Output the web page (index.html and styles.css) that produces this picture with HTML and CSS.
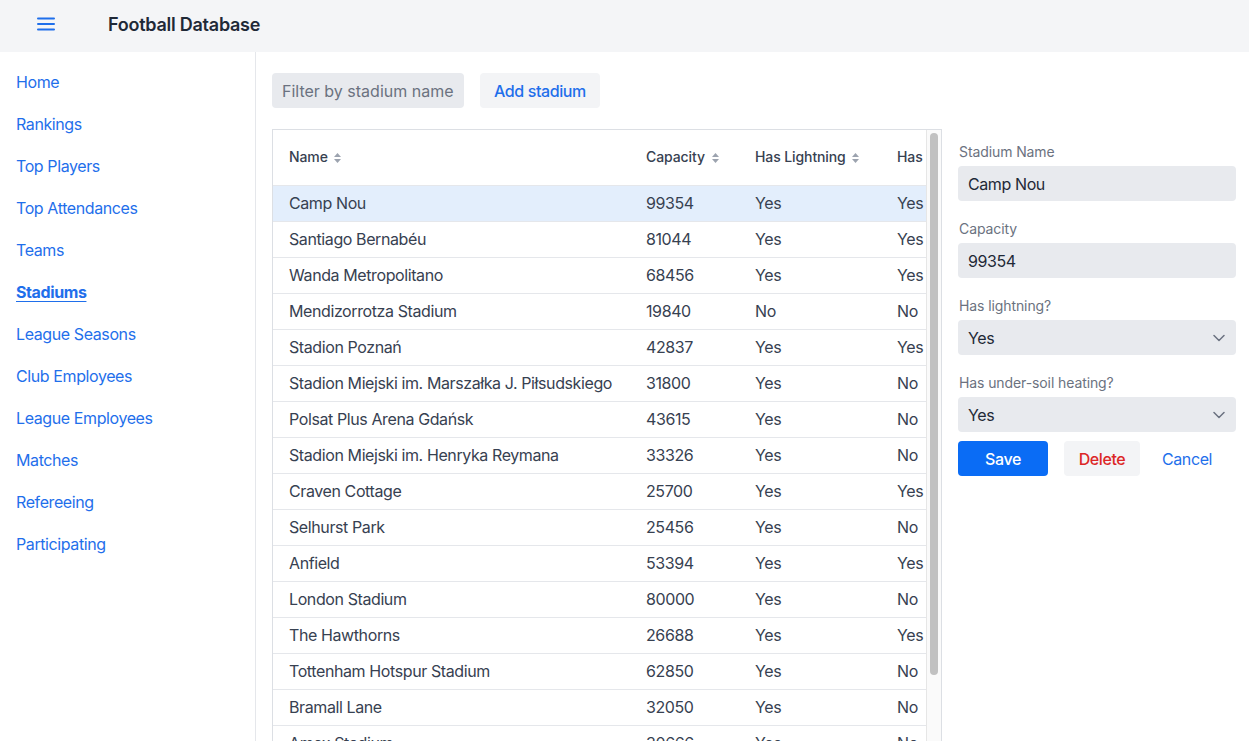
FILE: index.html
```html
<!DOCTYPE html>
<html lang="en">
<head>
<meta charset="utf-8">
<title>Football Database</title>
<link rel="stylesheet" href="styles.css">
</head>
<body>
<header class="topbar">
  <button class="menu-btn" aria-label="Menu">
    <svg width="18" height="14" viewBox="0 0 18 14"><path d="M1 1.5h16M1 7h16M1 12.5h16" stroke="#1f6feb" stroke-width="2" stroke-linecap="round"/></svg>
  </button>
  <h1 class="title">Football Database</h1>
</header>
<div class="layout">
  <nav class="sidebar">
    <a class="nav-link" href="#">Home</a>
    <a class="nav-link" href="#">Rankings</a>
    <a class="nav-link" href="#">Top Players</a>
    <a class="nav-link" href="#">Top Attendances</a>
    <a class="nav-link" href="#">Teams</a>
    <a class="nav-link active" href="#">Stadiums</a>
    <a class="nav-link" href="#">League Seasons</a>
    <a class="nav-link" href="#">Club Employees</a>
    <a class="nav-link" href="#">League Employees</a>
    <a class="nav-link" href="#">Matches</a>
    <a class="nav-link" href="#">Refereeing</a>
    <a class="nav-link" href="#">Participating</a>
  </nav>
  <main class="main">
    <div class="toolbar">
      <input class="filter" type="text" placeholder="Filter by stadium name">
      <button class="btn btn-light">Add stadium</button>
    </div>
    <div class="content">
      <div class="table-wrap">
        <div class="table-viewport">
          <table class="grid">
            <colgroup><col class="c1"><col class="c2"><col class="c3"><col class="c4"></colgroup>
            <thead>
              <tr>
                <th>Name <svg class="sort" width="7" height="10" viewBox="0 0 7 10"><path d="M3.5 0L7 4H0z M0 6h7L3.5 10z" fill="#9ca3af"/></svg></th>
                <th>Capacity <svg class="sort" width="7" height="10" viewBox="0 0 7 10"><path d="M3.5 0L7 4H0z M0 6h7L3.5 10z" fill="#9ca3af"/></svg></th>
                <th>Has Lightning <svg class="sort" width="7" height="10" viewBox="0 0 7 10"><path d="M3.5 0L7 4H0z M0 6h7L3.5 10z" fill="#9ca3af"/></svg></th>
                <th>Has Under-soil Heating <svg class="sort" width="7" height="10" viewBox="0 0 7 10"><path d="M3.5 0L7 4H0z M0 6h7L3.5 10z" fill="#9ca3af"/></svg></th>
              </tr>
            </thead>
            <tbody>
              <tr class="selected"><td>Camp Nou</td><td>99354</td><td>Yes</td><td>Yes</td></tr>
              <tr><td>Santiago Bernabéu</td><td>81044</td><td>Yes</td><td>Yes</td></tr>
              <tr><td>Wanda Metropolitano</td><td>68456</td><td>Yes</td><td>Yes</td></tr>
              <tr><td>Mendizorrotza Stadium</td><td>19840</td><td>No</td><td>No</td></tr>
              <tr><td>Stadion Poznań</td><td>42837</td><td>Yes</td><td>Yes</td></tr>
              <tr><td>Stadion Miejski im. Marszałka J. Piłsudskiego</td><td>31800</td><td>Yes</td><td>No</td></tr>
              <tr><td>Polsat Plus Arena Gdańsk</td><td>43615</td><td>Yes</td><td>No</td></tr>
              <tr><td>Stadion Miejski im. Henryka Reymana</td><td>33326</td><td>Yes</td><td>No</td></tr>
              <tr><td>Craven Cottage</td><td>25700</td><td>Yes</td><td>Yes</td></tr>
              <tr><td>Selhurst Park</td><td>25456</td><td>Yes</td><td>No</td></tr>
              <tr><td>Anfield</td><td>53394</td><td>Yes</td><td>Yes</td></tr>
              <tr><td>London Stadium</td><td>80000</td><td>Yes</td><td>No</td></tr>
              <tr><td>The Hawthorns</td><td>26688</td><td>Yes</td><td>Yes</td></tr>
              <tr><td>Tottenham Hotspur Stadium</td><td>62850</td><td>Yes</td><td>No</td></tr>
              <tr><td>Bramall Lane</td><td>32050</td><td>Yes</td><td>No</td></tr>
              <tr><td>Amex Stadium</td><td>30666</td><td>Yes</td><td>No</td></tr>
              <tr><td>Emirates Stadium</td><td>60704</td><td>Yes</td><td>Yes</td></tr>
              <tr><td>Villa Park</td><td>42657</td><td>Yes</td><td>Yes</td></tr>
            </tbody>
          </table>
        </div>
        <div class="scrollbar"><div class="thumb"></div></div>
      </div>
      <form class="editor">
        <label class="field-label">Stadium Name</label>
        <input class="field" type="text" value="Camp Nou">
        <label class="field-label">Capacity</label>
        <input class="field" type="text" value="99354">
        <label class="field-label">Has lightning?</label>
        <div class="select">Yes
          <svg class="chev" width="12" height="8" viewBox="0 0 12 8"><path d="M1 1.5l5 5 5-5" fill="none" stroke="#6b7280" stroke-width="1.5" stroke-linecap="round" stroke-linejoin="round"/></svg>
        </div>
        <label class="field-label">Has under-soil heating?</label>
        <div class="select">Yes
          <svg class="chev" width="12" height="8" viewBox="0 0 12 8"><path d="M1 1.5l5 5 5-5" fill="none" stroke="#6b7280" stroke-width="1.5" stroke-linecap="round" stroke-linejoin="round"/></svg>
        </div>
        <div class="actions">
          <button type="button" class="btn btn-primary">Save</button>
          <button type="button" class="btn btn-danger">Delete</button>
          <button type="button" class="btn btn-link">Cancel</button>
        </div>
      </form>
    </div>
  </main>
</div>
</body>
</html>
```

FILE: styles.css
```css
* { box-sizing: border-box; }
html, body { margin: 0; height: 100%; overflow: hidden; }
body {
  font-family: Inter, "Noto Sans", sans-serif;
  font-size: 16px;
  letter-spacing: -0.4px;
  color: #374151;
  background: #fff;
}
.topbar {
  height: 52px;
  background: #f4f5f7;
  display: flex;
  align-items: center;
  padding-bottom: 4px;
}
.menu-btn {
  border: 0;
  background: none;
  padding: 0;
  margin-left: 37px;
  width: 18px;
  height: 14px;
  display: flex;
}
.title {
  margin: 0 0 0 53px;
  font-size: 18px;
  font-weight: 600;
  letter-spacing: -0.25px;
  color: #1f2937;
}
.layout {
  display: flex;
  height: calc(100% - 52px);
}
.sidebar {
  width: 256px;
  flex: none;
  border-right: 1px solid #e5e7eb;
  padding-top: 9px;
  display: flex;
  flex-direction: column;
}
.nav-link {
  color: #1f6feb;
  text-decoration: none;
  padding: 9px 16px;
  line-height: 24px;
}
.nav-link.active {
  font-weight: 700;
  text-decoration: underline;
  text-underline-offset: 3px;
}
.main {
  flex: 1;
  padding: 21px 13px 0 16px;
  display: flex;
  flex-direction: column;
  min-width: 0;
}
.toolbar {
  display: flex;
  gap: 16px;
  height: 35px;
}
.filter {
  width: 192px;
  height: 35px;
  border: 0;
  border-radius: 4px;
  background: #e8eaee;
  padding: 0 10px;
  font: inherit;
  letter-spacing: 0;
  color: #1f2937;
}
.filter::placeholder { color: #6b7280; }
.btn {
  font: inherit;
  letter-spacing: inherit;
  border: 0;
  border-radius: 4px;
  height: 35px;
  padding: 0 14px;
  cursor: pointer;
}
.btn-light { background: #f3f4f6; color: #1f6feb; font-weight: 500; }
.content {
  display: flex;
  gap: 16px;
  margin-top: 21px;
  flex: 1;
  min-height: 0;
}
.table-wrap {
  width: 670px;
  flex: none;
  border: 1px solid #dcdfe4;
  border-bottom: 0;
  display: flex;
  height: 100%;
}
.table-viewport {
  flex: 1;
  min-width: 0;
  overflow: hidden;
}
.scrollbar {
  width: 15px;
  flex: none;
  background: #fafafa;
  border-left: 1px solid #e6e6e6;
  padding: 3px 3px 0 3px;
}
.thumb {
  height: 542px;
  border-radius: 4px;
  background: #c1c1c1;
}
.grid {
  border-collapse: collapse;
  table-layout: fixed;
  width: 808px;
}
.c1 { width: 357px; }
.c2 { width: 109px; }
.c3 { width: 142px; }
.c4 { width: 200px; }
.grid th {
  text-align: left;
  font-size: 14px;
  font-weight: 500;
  letter-spacing: -0.1px;
  color: #374151;
  height: 55px;
  padding: 0 16px 2px;
  border-bottom: 1px solid #e5e7eb;
  white-space: nowrap;
}
.sort {
  margin-left: 3px;
  vertical-align: -1px;
}
.grid td {
  height: 36px;
  padding: 0 16px;
  border-bottom: 1px solid #e5e7eb;
  white-space: nowrap;
  overflow: hidden;
  color: #374151;
}
.grid tr.selected td { background: #e3eefc; }
.editor {
  width: 278px;
  flex: none;
  display: flex;
  flex-direction: column;
  padding-top: 13px;
}
.field-label {
  font-size: 14px;
  letter-spacing: -0.1px;
  line-height: 20px;
  color: #6b7280;
  margin-bottom: 4px;
  margin-top: 18px;
  padding-left: 1px;
}
.field-label:first-child { margin-top: 0; }
.field {
  height: 35px;
  border: 0;
  border-radius: 4px;
  background: #e8eaee;
  padding: 0 10px;
  font: inherit;
  letter-spacing: inherit;
  color: #1f2937;
}
.select {
  height: 35px;
  border-radius: 4px;
  background: #e8eaee;
  padding: 0 10px;
  color: #1f2937;
  display: flex;
  align-items: center;
  justify-content: space-between;
}
.chev { margin-right: 1px; }
.actions {
  display: flex;
  gap: 16px;
  margin-top: 9px;
}
.btn-primary { background: #0a6cf5; color: #fff; width: 90px; font-weight: 500; }
.btn-danger { background: #f3f4f6; color: #dc2626; width: 76px; font-weight: 500; }
.btn-link { background: none; color: #1f6feb; padding: 0 6px; }
```
